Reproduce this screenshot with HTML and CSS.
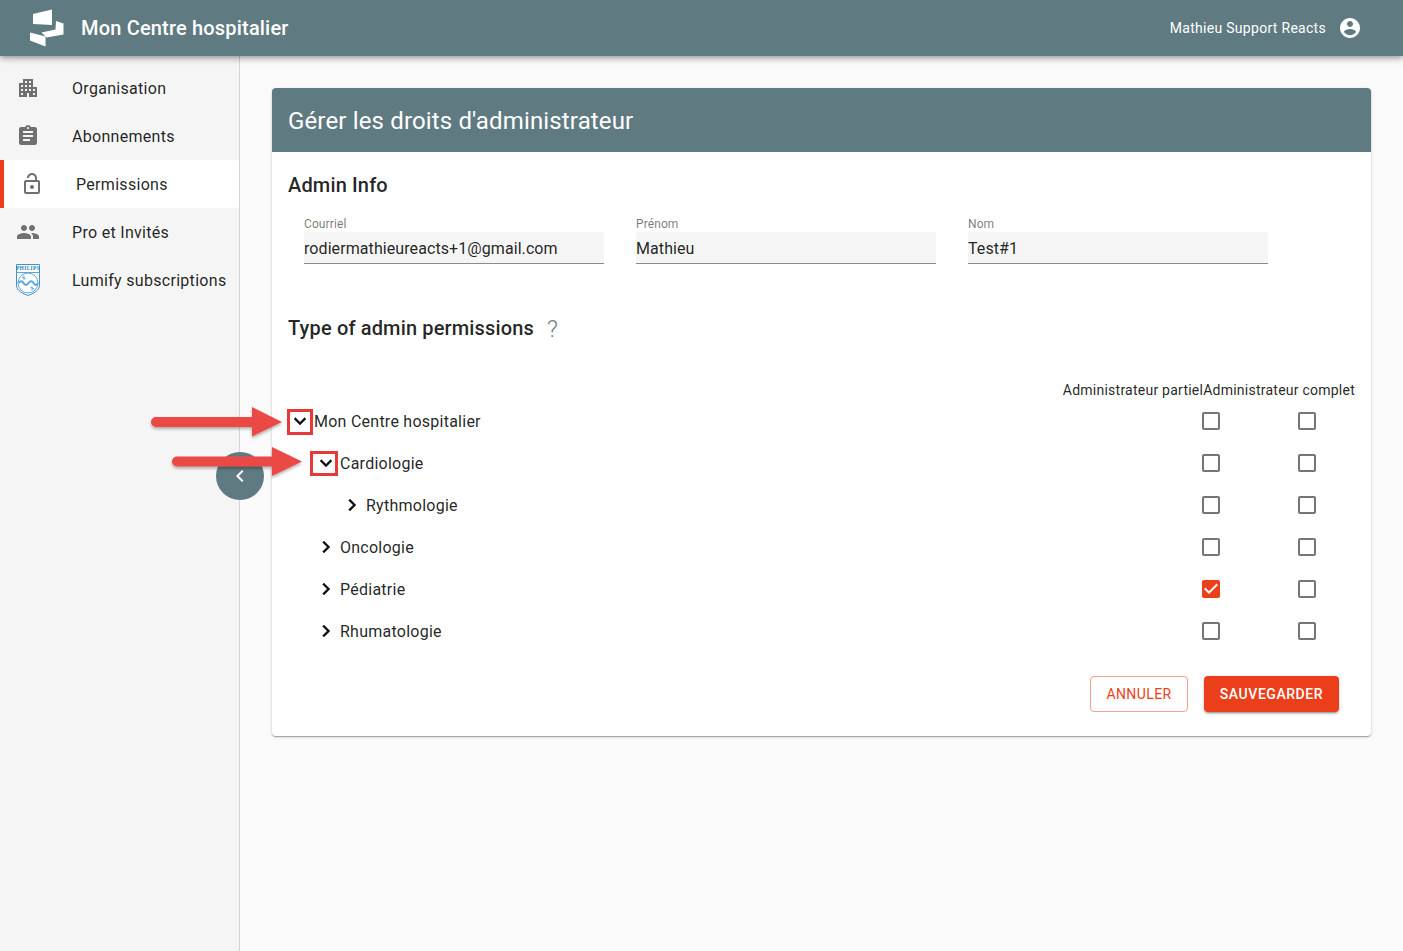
FILE: index.html
```html
<!DOCTYPE html>
<html lang="fr">
<head>
<meta charset="utf-8">
<title>Mon Centre hospitalier</title>
<link rel="stylesheet" href="styles.css">
</head>
<body>
<header class="topbar">
  <div class="brand">
    <svg class="logo" viewBox="0 0 34 38"><path d="M3 5 22 .5V16L3 15Z"/><path d="M26 12 33.500 14.500V25.500L16.500 28.500 11.500 23.500 25.500 20.500Z"/><path d="M0 23.500 15.500 27.500 15.500 37.500 0 31.500Z"/></svg>
    <span class="brand-name">Mon Centre hospitalier</span>
  </div>
  <div class="user">
    <span class="user-name">Mathieu Support Reacts</span>
    <svg class="icon user-icon" viewBox="0 0 24 24"><path d="M12 2C6.480 2 2 6.480 2 12s4.480 10 10 10 10-4.480 10-10S17.520 2 12 2zm0 3c1.660 0 3 1.340 3 3s-1.340 3-3 3-3-1.340-3-3 1.340-3 3-3zm0 14.200c-2.500 0-4.710-1.280-6-3.220.03-1.990 4-3.080 6-3.080 1.990 0 5.970 1.090 6 3.080-1.290 1.940-3.500 3.220-6 3.220z"/></svg>
  </div>
</header>

<div class="layout">
  <nav class="sidebar">
    <a class="nav-item">
      <svg class="icon nav-icon" viewBox="0 0 24 24"><path d="M17 11V3H7v4H3v14h8v-4h2v4h8V11h-4zM7 19H5v-2h2v2zm0-4H5v-2h2v2zm0-4H5V9h2v2zm4 4H9v-2h2v2zm0-4H9V9h2v2zm0-4H9V5h2v2zm4 8h-2v-2h2v2zm0-4h-2V9h2v2zm0-4h-2V5h2v2zm4 12h-2v-2h2v2zm0-4h-2v-2h2v2z"/></svg>
      <span>Organisation</span>
    </a>
    <a class="nav-item">
      <svg class="icon nav-icon" viewBox="0 0 24 24"><path d="M19 3h-4.180C14.400 1.840 13.300 1 12 1c-1.300 0-2.400.84-2.820 2H5c-1.100 0-2 .9-2 2v14c0 1.100.9 2 2 2h14c1.100 0 2-.9 2-2V5c0-1.100-.9-2-2-2zm-7 0c.55 0 1 .45 1 1s-.45 1-1 1-1-.45-1-1 .45-1 1-1zm2 14H7v-2h7v2zm3-4H7v-2h10v2zm0-4H7V7h10v2z"/></svg>
      <span>Abonnements</span>
    </a>
    <a class="nav-item active">
      <svg class="icon nav-icon" viewBox="0 0 24 24"><path d="M12 17c1.100 0 2-.9 2-2s-.9-2-2-2-2 .9-2 2 .9 2 2 2zm6-9h-1V6c0-2.760-2.240-5-5-5S7 3.240 7 6h1.900c0-1.710 1.390-3.100 3.100-3.100 1.710 0 3.100 1.390 3.100 3.100v2H6c-1.100 0-2 .9-2 2v10c0 1.100.9 2 2 2h12c1.100 0 2-.9 2-2V10c0-1.100-.9-2-2-2zm0 12H6V10h12v10z"/></svg>
      <span>Permissions</span>
    </a>
    <a class="nav-item">
      <svg class="icon nav-icon" viewBox="0 0 24 24"><path d="M16 11c1.660 0 2.990-1.340 2.990-3S17.660 5 16 5c-1.660 0-3 1.340-3 3s1.340 3 3 3zm-8 0c1.660 0 2.990-1.340 2.990-3S9.660 5 8 5C6.340 5 5 6.340 5 8s1.340 3 3 3zm0 2c-2.330 0-7 1.170-7 3.500V19h14v-2.500c0-2.330-4.670-3.500-7-3.500zm8 0c-.29 0-.62.02-.97.05 1.160.84 1.970 1.970 1.970 3.450V19h6v-2.500c0-2.330-4.670-3.500-7-3.500z"/></svg>
      <span>Pro et Invités</span>
    </a>
    <a class="nav-item">
      <svg class="icon nav-icon philips" viewBox="0 0 24 32">
        <path class="shield" d="M.5.500H23.500V21C23.500 27 17 29.500 12 31.500 7 29.500 .5 27 .5 21Z"/>
        <text class="philips-word" x="12" y="6.200" text-anchor="middle">PHILIPS</text>
        <path class="globe" d="M.5 8.500H23.500"/>
        <circle class="globe" cx="12" cy="19" r="10"/>
        <path class="globe wave" d="M2.500 19c2-2.500 3.500-2.500 5 0s3.500 2.500 5 0 3.500-2.500 5 0 3 2.500 4.500 0"/>
        <path class="globe" d="M6 13l3.500 2M8 11.500v4M18 25l-3.500-2M16 26.500v-4"/>
      </svg>
      <span>Lumify subscriptions</span>
    </a>
  </nav>

  <main class="content">
    <section class="card">
      <h1 class="card-title">Gérer les droits d'administrateur</h1>
      <div class="card-body">
        <h2 class="section-title">Admin Info</h2>
        <div class="fields">
          <div class="field">
            <label class="field-label">Courriel</label>
            <div class="field-value">rodiermathieureacts+1@gmail.com</div>
          </div>
          <div class="field">
            <label class="field-label">Prénom</label>
            <div class="field-value">Mathieu</div>
          </div>
          <div class="field">
            <label class="field-label">Nom</label>
            <div class="field-value">Test#1</div>
          </div>
        </div>

        <div class="perm-heading">
          <h2 class="section-title">Type of admin permissions</h2>
          <span class="help">?</span>
        </div>

        <div class="col-heads">
          <span>Administrateur partiel</span><span>Administrateur complet</span>
        </div>

        <div class="tree">
          <div class="tree-row level-0">
            <svg class="icon chevron" viewBox="0 0 24 24"><path d="M16.590 8.590L12 13.170 7.410 8.590 6 10l6 6 6-6z"/></svg>
            <span class="tree-label">Mon Centre hospitalier</span>
            <div class="check-cell"><svg class="icon check" viewBox="0 0 24 24"><path d="M19 5v14H5V5h14m0-2H5c-1.100 0-2 .9-2 2v14c0 1.100.9 2 2 2h14c1.100 0 2-.9 2-2V5c0-1.100-.9-2-2-2z"/></svg></div>
            <div class="check-cell"><svg class="icon check" viewBox="0 0 24 24"><path d="M19 5v14H5V5h14m0-2H5c-1.100 0-2 .9-2 2v14c0 1.100.9 2 2 2h14c1.100 0 2-.9 2-2V5c0-1.100-.9-2-2-2z"/></svg></div>
          </div>
          <div class="tree-row level-1">
            <svg class="icon chevron" viewBox="0 0 24 24"><path d="M16.590 8.590L12 13.170 7.410 8.590 6 10l6 6 6-6z"/></svg>
            <span class="tree-label">Cardiologie</span>
            <div class="check-cell"><svg class="icon check" viewBox="0 0 24 24"><path d="M19 5v14H5V5h14m0-2H5c-1.100 0-2 .9-2 2v14c0 1.100.9 2 2 2h14c1.100 0 2-.9 2-2V5c0-1.100-.9-2-2-2z"/></svg></div>
            <div class="check-cell"><svg class="icon check" viewBox="0 0 24 24"><path d="M19 5v14H5V5h14m0-2H5c-1.100 0-2 .9-2 2v14c0 1.100.9 2 2 2h14c1.100 0 2-.9 2-2V5c0-1.100-.9-2-2-2z"/></svg></div>
          </div>
          <div class="tree-row level-2">
            <svg class="icon chevron" viewBox="0 0 24 24"><path d="M8.590 16.590L13.170 12 8.590 7.410 10 6l6 6-6 6z"/></svg>
            <span class="tree-label">Rythmologie</span>
            <div class="check-cell"><svg class="icon check" viewBox="0 0 24 24"><path d="M19 5v14H5V5h14m0-2H5c-1.100 0-2 .9-2 2v14c0 1.100.9 2 2 2h14c1.100 0 2-.9 2-2V5c0-1.100-.9-2-2-2z"/></svg></div>
            <div class="check-cell"><svg class="icon check" viewBox="0 0 24 24"><path d="M19 5v14H5V5h14m0-2H5c-1.100 0-2 .9-2 2v14c0 1.100.9 2 2 2h14c1.100 0 2-.9 2-2V5c0-1.100-.9-2-2-2z"/></svg></div>
          </div>
          <div class="tree-row level-1">
            <svg class="icon chevron" viewBox="0 0 24 24"><path d="M8.590 16.590L13.170 12 8.590 7.410 10 6l6 6-6 6z"/></svg>
            <span class="tree-label">Oncologie</span>
            <div class="check-cell"><svg class="icon check" viewBox="0 0 24 24"><path d="M19 5v14H5V5h14m0-2H5c-1.100 0-2 .9-2 2v14c0 1.100.9 2 2 2h14c1.100 0 2-.9 2-2V5c0-1.100-.9-2-2-2z"/></svg></div>
            <div class="check-cell"><svg class="icon check" viewBox="0 0 24 24"><path d="M19 5v14H5V5h14m0-2H5c-1.100 0-2 .9-2 2v14c0 1.100.9 2 2 2h14c1.100 0 2-.9 2-2V5c0-1.100-.9-2-2-2z"/></svg></div>
          </div>
          <div class="tree-row level-1">
            <svg class="icon chevron" viewBox="0 0 24 24"><path d="M8.590 16.590L13.170 12 8.590 7.410 10 6l6 6-6 6z"/></svg>
            <span class="tree-label">Pédiatrie</span>
            <div class="check-cell"><svg class="icon check checked" viewBox="0 0 24 24"><rect class="check-tick" x="4" y="5" width="16" height="14"/><path d="M19 3H5c-1.110 0-2 .9-2 2v14c0 1.100.89 2 2 2h14c1.110 0 2-.89 2-2V5c0-1.100-.89-2-2-2zm-9 14l-5-5 1.410-1.410L10 14.170l7.590-7.590L19 8l-9 9z"/></svg></div>
            <div class="check-cell"><svg class="icon check" viewBox="0 0 24 24"><path d="M19 5v14H5V5h14m0-2H5c-1.100 0-2 .9-2 2v14c0 1.100.9 2 2 2h14c1.100 0 2-.9 2-2V5c0-1.100-.9-2-2-2z"/></svg></div>
          </div>
          <div class="tree-row level-1">
            <svg class="icon chevron" viewBox="0 0 24 24"><path d="M8.590 16.590L13.170 12 8.590 7.410 10 6l6 6-6 6z"/></svg>
            <span class="tree-label">Rhumatologie</span>
            <div class="check-cell"><svg class="icon check" viewBox="0 0 24 24"><path d="M19 5v14H5V5h14m0-2H5c-1.100 0-2 .9-2 2v14c0 1.100.9 2 2 2h14c1.100 0 2-.9 2-2V5c0-1.100-.9-2-2-2z"/></svg></div>
            <div class="check-cell"><svg class="icon check" viewBox="0 0 24 24"><path d="M19 5v14H5V5h14m0-2H5c-1.100 0-2 .9-2 2v14c0 1.100.9 2 2 2h14c1.100 0 2-.9 2-2V5c0-1.100-.9-2-2-2z"/></svg></div>
          </div>
        </div>

        <div class="actions">
          <button class="btn btn-outline">ANNULER</button>
          <button class="btn btn-solid">SAUVEGARDER</button>
        </div>
      </div>
    </section>
  </main>
</div>

<button class="collapse">
  <svg class="icon" viewBox="0 0 24 24"><path d="M15.410 16.590L10.830 12l4.580-4.590L14 6l-6 6 6 6z"/></svg>
</button>

<svg class="annotations" viewBox="0 0 1403 951">
  <defs>
    <filter id="arrow-shadow" x="-10%" y="-30%" width="120%" height="170%">
      <feDropShadow dx="0" dy="2" stdDeviation="1.500" flood-color="#000" flood-opacity=".3"/>
    </filter>
  </defs>
  <path class="arrow" d="M156 417H252V407L282 422 252 436.500V427H156a5 5 0 0 1 0-10Z"/>
  <path class="arrow" d="M177 456.500H272V447L302 461.500 272 476V466.500H177a5 5 0 0 1 0-10Z"/>
  <rect class="mark" x="288.500" y="410.500" width="23" height="23"/>
  <rect class="mark" x="311.500" y="452.500" width="25" height="22"/>
</svg>
</body>
</html>
```

FILE: styles.css
```css
* { box-sizing: border-box; }

html, body {
  margin: 0;
  height: 951px;
  overflow: hidden;
}

body {
  position: relative;
  font-family: Roboto, "Liberation Sans", sans-serif;
  font-size: 16px;
  color: rgba(0, 0, 0, .87);
  background: #fafafa;
  display: flex;
  flex-direction: column;
}

.icon {
  display: block;
  width: 24px;
  height: 24px;
  fill: currentColor;
  flex: none;
}

/* top bar */
.topbar {
  position: relative;
  z-index: 2;
  flex: none;
  height: 56px;
  display: flex;
  align-items: center;
  justify-content: space-between;
  padding: 0 41px 0 30px;
  background: #5f7a80;
  color: #fff;
  box-shadow: 0 2px 4px -1px rgba(0,0,0,.2), 0 4px 5px 0 rgba(0,0,0,.14), 0 1px 10px 0 rgba(0,0,0,.12);
}

.brand {
  display: flex;
  align-items: center;
}

.logo {
  display: block;
  width: 34px;
  height: 38px;
  fill: #fff;
  margin-right: 17px;
}

.brand-name {
  font-size: 20px;
  font-weight: 500;
  letter-spacing: .18px;
}

.user {
  display: flex;
  align-items: center;
  gap: 12px;
}

.user-name {
  font-size: 14px;
  font-weight: 400;
  letter-spacing: .29px;
}

/* layout */
.layout {
  flex: 1;
  display: flex;
  min-height: 0;
}

.sidebar {
  flex: none;
  width: 240px;
  padding-top: 8px;
  background: #f5f5f5;
  border-right: 1px solid #d4d4d4;
}

.nav-item {
  height: 48px;
  display: flex;
  align-items: center;
  padding-left: 16px;
  letter-spacing: .3px;
  color: rgba(0, 0, 0, .87);
}

.nav-icon {
  color: #707070;
  margin-right: 32px;
}

.nav-item.active {
  background: #fff;
  border-left: 4px solid #eb3f1c;
}

.philips {
  height: 32px;
  color: #3f93cb;
}

.shield {
  fill: #fff;
  stroke: #3f93cb;
  stroke-width: 1;
}

.philips-word {
  font-family: "Liberation Serif", serif;
  font-size: 5.500px;
  font-weight: 700;
  fill: #2f7fb8;
}

.globe {
  fill: none;
  stroke: #5ba6d8;
  stroke-width: 1;
}

.wave {
  stroke-width: 2;
}

/* main content */
.content {
  flex: 1;
  min-width: 0;
  padding: 32px 32px 0;
}

.card {
  background: #fff;
  border-radius: 4px;
  box-shadow: 0 1px 3px rgba(0,0,0,.2), 0 1px 1px rgba(0,0,0,.14), 0 2px 1px -1px rgba(0,0,0,.12);
}

.card-title {
  margin: 0;
  height: 64px;
  padding: 2px 16px 0;
  display: flex;
  align-items: center;
  font-size: 24px;
  font-weight: 400;
  letter-spacing: .15px;
  color: #fff;
  background: #5f7a80;
  border-radius: 4px 4px 0 0;
}

.card-body {
  padding: 20px 16px 24px;
}

.section-title {
  margin: 0;
  font-size: 20px;
  font-weight: 500;
  line-height: 26px;
  letter-spacing: .15px;
}

.fields {
  display: flex;
  gap: 32px;
  padding: 19px 16px 0;
}

.field {
  width: 300px;
}

.field-label {
  display: block;
  font-size: 12px;
  line-height: 14px;
  letter-spacing: .1px;
  color: rgba(0, 0, 0, .54);
  margin-bottom: 1px;
}

.field-value {
  height: 32px;
  line-height: 33px;
  letter-spacing: .08px;
  background: #f5f5f5;
  border-bottom: 1px solid #8c8c8c;
}

.perm-heading {
  display: flex;
  align-items: center;
  gap: 13px;
  margin-top: 50px;
}

.help {
  font-size: 24px;
  font-weight: 300;
  line-height: 26px;
  color: #6f8086;
  margin-top: 2px;
}

.col-heads {
  display: flex;
  justify-content: flex-end;
  margin-top: 40px;
  font-size: 14px;
  line-height: 16px;
  letter-spacing: .24px;
}

.tree {
  margin-top: 2px;
}

.tree-row {
  height: 42px;
  display: flex;
  align-items: center;
}

.level-1 { padding-left: 26px; }
.level-2 { padding-left: 52px; }

.chevron {
  margin-right: 2px;
  color: #111;
  stroke: #111;
  stroke-width: .4;
}

.tree-label {
  flex: 1;
  letter-spacing: .25px;
}

.check-cell {
  width: 96px;
  display: flex;
  justify-content: center;
  color: #757575;
}

.checked { color: #eb3f1c; }
.check-tick { fill: #fff; }

.actions {
  display: flex;
  justify-content: flex-end;
  gap: 16px;
  padding-right: 16px;
  margin-top: 24px;
}

.btn {
  height: 36px;
  padding: 0 15px;
  border-radius: 4px;
  font-family: inherit;
  font-size: 14px;
  letter-spacing: .4px;
}

.btn-outline {
  width: 98px;
  font-weight: 400;
  color: #eb3f1c;
  background: #fff;
  border: 1px solid #f59f8d;
}

.btn-solid {
  width: 135px;
  font-weight: 500;
  letter-spacing: .55px;
  color: #fff;
  background: #eb3f1c;
  border: 0;
  box-shadow: 0 3px 1px -2px rgba(0,0,0,.2), 0 2px 2px 0 rgba(0,0,0,.14), 0 1px 5px 0 rgba(0,0,0,.12);
}

/* overlays */
.collapse {
  position: absolute;
  left: 216px;
  top: 452px;
  width: 48px;
  height: 48px;
  padding: 12px;
  border: 0;
  border-radius: 50%;
  color: #fff;
  background: #5f7a80;
}

.annotations {
  position: absolute;
  left: 0;
  top: 0;
  width: 1403px;
  height: 951px;
  pointer-events: none;
}

.arrow {
  fill: #eb4a44;
  filter: url(#arrow-shadow);
}

.mark {
  fill: none;
  stroke: #e53a3a;
  stroke-width: 3;
}
```
